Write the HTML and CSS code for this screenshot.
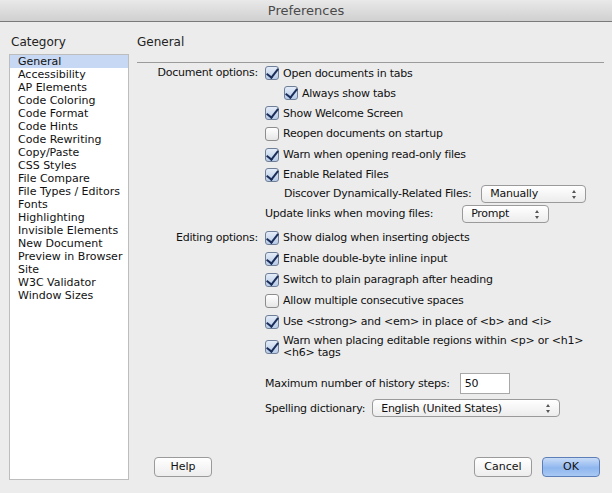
FILE: index.html
```html
<!DOCTYPE html>
<html>
<head>
<meta charset="utf-8">
<link rel="stylesheet" href="styles.css">
</head>
<body>
<div class="window">
  <div class="titlebar">Preferences</div>
  <div class="main">
    <div class="sidebar">
      <div class="heading">Category</div>
      <ul class="list">
        <li class="selected">General</li>
        <li>Accessibility</li>
        <li>AP Elements</li>
        <li>Code Coloring</li>
        <li>Code Format</li>
        <li>Code Hints</li>
        <li>Code Rewriting</li>
        <li>Copy/Paste</li>
        <li>CSS Styles</li>
        <li>File Compare</li>
        <li>File Types / Editors</li>
        <li>Fonts</li>
        <li>Highlighting</li>
        <li>Invisible Elements</li>
        <li>New Document</li>
        <li>Preview in Browser</li>
        <li>Site</li>
        <li>W3C Validator</li>
        <li>Window Sizes</li>
      </ul>
    </div>
    <div class="content">
      <div class="heading section-title">General</div>
      <div class="form">
        <div class="label r1">Document options:</div>
        <div class="row r1"><span class="cb on"></span>Open documents in tabs</div>
        <div class="row r-sub indent"><span class="cb on"></span>Always show tabs</div>
        <div class="row"><span class="cb on"></span>Show Welcome Screen</div>
        <div class="row r21"><span class="cb"></span>Reopen documents on startup</div>
        <div class="row r21"><span class="cb on"></span>Warn when opening read-only files</div>
        <div class="row r19"><span class="cb on"></span>Enable Related Files</div>
        <div class="row r19 indent2">Discover Dynamically-Related Files:<span class="select sel-manual">Manually<span class="arrows"></span></span></div>
        <div class="row r21 plain">Update links when moving files:<span class="select sel-prompt">Prompt<span class="arrows"></span></span></div>

        <div class="label r-edit">Editing options:</div>
        <div class="row r-edit"><span class="cb on"></span>Show dialog when inserting objects</div>
        <div class="row r21"><span class="cb on"></span>Enable double-byte inline input</div>
        <div class="row r21"><span class="cb on"></span>Switch to plain paragraph after heading</div>
        <div class="row r21"><span class="cb"></span>Allow multiple consecutive spaces</div>
        <div class="row r21"><span class="cb on"></span>Use &lt;strong&gt; and &lt;em&gt; in place of &lt;b&gt; and &lt;i&gt;</div>
        <div class="row wrap"><span class="cb on"></span><span class="wraptext">Warn when placing editable regions within &lt;p&gt; or &lt;h1&gt;<br>&lt;h6&gt; tags</span></div>

        <div class="row plain r-max">Maximum number of history steps:<span class="input">50</span></div>
        <div class="row plain r-spell">Spelling dictionary:<span class="select sel-dict">English (United States)<span class="arrows"></span></span></div>
      </div>
      <div class="buttons">
        <span class="btn help">Help</span>
        <span class="spacer"></span>
        <span class="btn cancel">Cancel</span>
        <span class="btn ok">OK</span>
      </div>
    </div>
  </div>
</div>
</body>
</html>
```
FILE: styles.css
```css
html, body {
  margin: 0;
  padding: 0;
}
body {
  width: 612px;
  height: 493px;
  overflow: hidden;
  background: #ececec;
  font-family: "DejaVu Sans", sans-serif;
  font-size: 11px;
  color: #111;
}
.window {
  width: 612px;
  height: 493px;
  display: flex;
  flex-direction: column;
}
.titlebar {
  height: 21px;
  line-height: 22px;
  border-bottom: 1px solid #7a7a7a;
  background: linear-gradient(#e9e9e9, #d0d0d0);
  text-align: center;
  font-size: 13px;
  color: #4a4a4a;
}
.main {
  flex: 1;
  display: flex;
  padding-left: 9px;
}
.sidebar {
  width: 120px;
  display: flex;
  flex-direction: column;
}
.heading {
  height: 32px;
  box-sizing: border-box;
  padding: 13px 0 0 2px;
  font-size: 12px;
  color: #222;
}
.list {
  list-style: none;
  margin: 0;
  padding: 0;
  height: 426px;
  box-sizing: border-box;
  background: #fff;
  border: 1px solid #bdbdbd;
}
.list li {
  height: 13px;
  line-height: 13px;
  padding-left: 8px;
  white-space: nowrap;
}
.list li.selected {
  background: #c6d8f4;
}
.content {
  margin-left: 8px;
  width: 467px;
  display: flex;
  flex-direction: column;
  letter-spacing: -0.25px;
}
.section-title {
  padding-left: 0;
  height: 41px;
  position: relative;
  letter-spacing: 0;
}
.section-title::after {
  content: "";
  position: absolute;
  left: 0;
  right: 0;
  top: 40px;
  height: 1px;
  background: #9b9b9b;
}
.form {
  display: grid;
  grid-template-columns: 121px 1fr;
  column-gap: 7px;
  align-items: center;
}
.label {
  grid-column: 1;
  text-align: right;
  white-space: nowrap;
}
.row {
  grid-column: 2;
  display: flex;
  align-items: center;
  height: 20px;
  white-space: nowrap;
}
.label.r1 { grid-row: 1; height: 20px; line-height: 20px; }
.row.r1 { grid-row: 1; }
.row.r21 { height: 21px; }
.row.r19 { height: 19px; }
.indent { padding-left: 19px; }
.indent2 { padding-left: 19px; }
.plain { padding-left: 0; }
.label.r-edit { grid-row: 9; margin-top: 3px; height: 21px; line-height: 21px; }
.row.r-edit { grid-row: 9; margin-top: 3px; height: 21px; }
.row.wrap {
  height: 30px;
  align-items: center;
}
.wraptext {
  line-height: 12px;
  white-space: nowrap;
}
.row.r-max { margin-top: 9px; height: 25px; }
.row.r-spell { height: 24px; }

.cb {
  width: 14px;
  height: 14px;
  box-sizing: border-box;
  border: 1px solid #8d8d8d;
  border-radius: 3px;
  background: linear-gradient(#ffffff, #e6e6e6);
  margin: 0 4px 0 0;
  flex: none;
  position: relative;
}
.cb.on {
  border-color: #6f7f98;
  background: linear-gradient(#e4ecf8, #b8cbe7);
}
.cb.on::after {
  content: "";
  position: absolute;
  left: 3px;
  top: -1px;
  width: 5px;
  height: 10px;
  border: solid #1b2e59;
  border-width: 0 2.5px 2.5px 0;
  transform: rotate(38deg);
}
.select {
  display: inline-flex;
  align-items: center;
  height: 18px;
  box-sizing: border-box;
  border: 1px solid #9a9a9a;
  border-radius: 4px;
  background: linear-gradient(#ffffff, #ececec);
  padding-left: 8px;
  position: relative;
  margin-left: 10px;
}
.arrows {
  position: absolute;
  right: 8px;
  top: 4px;
  width: 5px;
  height: 9px;
}
.arrows::before, .arrows::after {
  content: "";
  position: absolute;
  left: 0;
  border-left: 2.5px solid transparent;
  border-right: 2.5px solid transparent;
}
.arrows::before { top: 0; border-bottom: 3px solid #555; }
.arrows::after { bottom: 0; border-top: 3px solid #555; }
.sel-manual { width: 105px; }
.sel-prompt { width: 87px; margin-left: 29px; }
.sel-dict { width: 188px; margin-left: 7px; }
.input {
  margin-left: 10px;
  width: 50px;
  height: 21px;
  box-sizing: border-box;
  border: 1px solid #a8a8a8;
  background: #fff;
  padding: 3px 0 0 4px;
  line-height: 14px;
}
.buttons {
  margin-top: auto;
  margin-bottom: 16px;
  display: flex;
  align-items: center;
  padding-left: 17px;
  padding-right: 4px;
  letter-spacing: 0;
}
.spacer { flex: 1; }
.btn {
  width: 58px;
  height: 20px;
  box-sizing: border-box;
  border: 1px solid #9a9a9a;
  border-radius: 4px;
  background: linear-gradient(#ffffff, #ededed);
  text-align: center;
  line-height: 18px;
}
.btn.cancel { margin-right: 10px; }
.btn.ok {
  border-color: #5d7fb8;
  background: linear-gradient(#c9dcf7, #8fb6ef 55%, #a9c9f4);
}
```
